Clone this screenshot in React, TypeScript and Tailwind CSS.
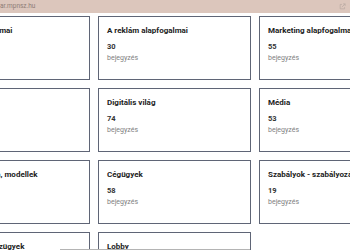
import React from "react";

const topics = [
  { name: "A PR alapfogalmai", count: 42 },
  { name: "A reklám alapfogalmai", count: 30 },
  { name: "Marketing alapfogalmai", count: 55 },
  { name: "Kutatás", count: 27 },
  { name: "Digitális világ", count: 74 },
  { name: "Média", count: 53 },
  { name: "Üzleti stratégia, modellek", count: 36 },
  { name: "Cégügyek", count: 58 },
  { name: "Szabályok - szabályozás", count: 19 },
  { name: "Gazdaság, pénzügyek", count: 22 },
  { name: "Lobby", count: 12 },
];

export default function App() {
  return (
    <div className="w-[350px] h-[250px] overflow-hidden bg-white font-['Roboto',sans-serif]">
      {/* address bar */}
      <div className="h-[13px] bg-[#dcc6bc] flex items-center justify-between pr-[4px]">
        <span className="text-[6.5px] leading-none text-[#8d7d77]">ar.mpnsz.hu</span>
        <svg width="7" height="7" viewBox="0 0 24 24" fill="none" stroke="#b9a9a2" strokeWidth="2.5">
          <path d="M14 3h7v7M10 14L21 3M19 14v6H4V5h6" />
        </svg>
      </div>

      {/* topic grid */}
      <div className="grid grid-cols-[153px_153px_153px] gap-x-[8px] gap-y-[8px] pt-[3px] -ml-[63px]">
        {topics.map((t, i) => (
          <div
            key={i}
            className="h-[64px] border-[1.5px] border-[#5f6576] bg-white px-[8px] pt-[9px] whitespace-nowrap overflow-hidden"
          >
            <div className="text-[8px] leading-[10px] font-bold text-[#222]">{t.name}</div>
            <div className="mt-[6px] text-[7.5px] leading-[10px] font-bold text-[#333]">{t.count}</div>
            <div className="mt-[1px] text-[7px] leading-[10px] text-[#808080]">bejegyzés</div>
          </div>
        ))}
      </div>

      {/* scrollbar */}
      <div className="fixed bottom-0 left-[60px] w-[190px] h-[1.5px] bg-[#b4b4b4]" />
    </div>
  );
}
